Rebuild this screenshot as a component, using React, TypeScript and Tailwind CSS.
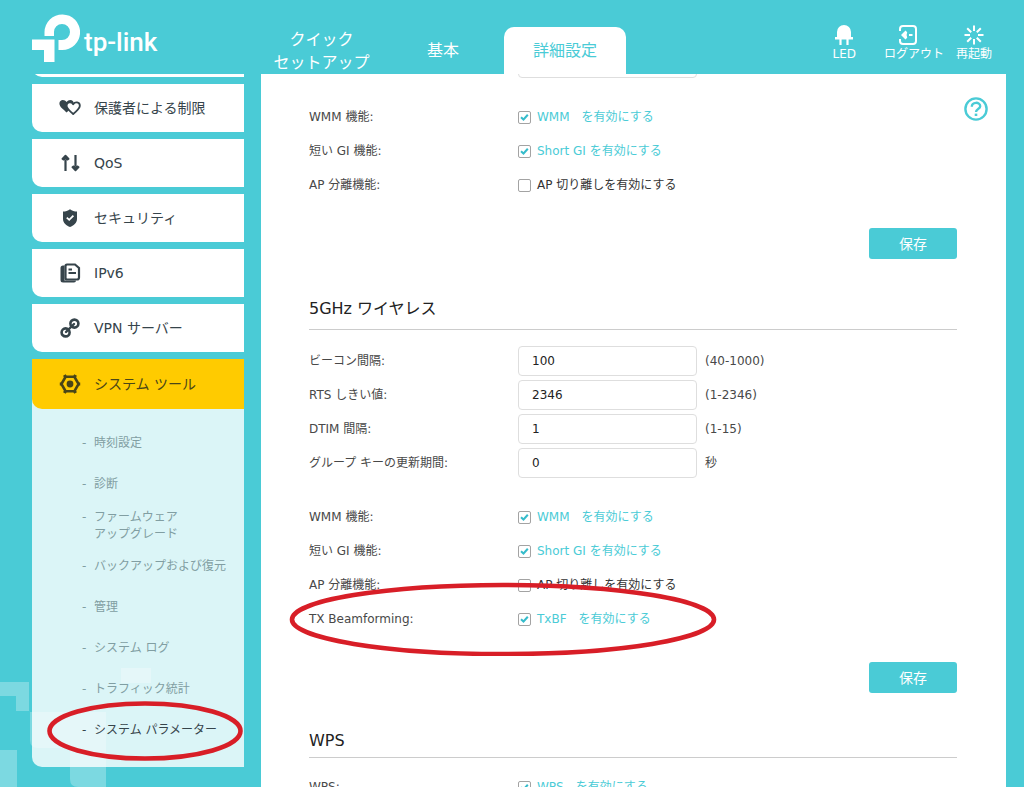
import React, { useId } from 'react';

type MenuIconName = 'heart' | 'qos' | 'shield' | 'doc' | 'link' | 'gear';

interface MenuEntry {
  label: string;
  icon: MenuIconName;
}

const MENU: MenuEntry[] = [
  { label: '保護者による制限', icon: 'heart' },
  { label: 'QoS', icon: 'qos' },
  { label: 'セキュリティ', icon: 'shield' },
  { label: 'IPv6', icon: 'doc' },
  { label: 'VPN サーバー', icon: 'link' },
];

const SUB_MENU: string[][] = [
  ['時刻設定'],
  ['診断'],
  ['ファームウェア', 'アップグレード'],
  ['バックアップおよび復元'],
  ['管理'],
  ['システム ログ'],
  ['トラフィック統計'],
];

const HEART = 'M0 3.4C-1.8 .4-7.2 .4-7.2 5C-7.2 8.6-2.8 11 0 14C2.8 11 7.2 8.6 7.2 5C7.2 .4 1.8 .4 0 3.4Z';

const MenuIcon: React.FC<{ name: MenuIconName }> = ({ name }) => (
  <svg viewBox="0 0 22 22" className="w-[22px] h-[22px] shrink-0 overflow-visible" fill="none" stroke="currentColor" strokeWidth={2} aria-hidden="true">
    {name === 'heart' && (
      <>
        <path d={HEART} transform="translate(7.6 1.6)" fill="currentColor" stroke="none" />
        <path d={HEART} transform="translate(14.2 4.2) scale(.92)" fill="#fff" strokeLinejoin="round" />
      </>
    )}
    {name === 'qos' && (
      <>
        <path d="M6.5 19V8M16.5 3v11" strokeWidth={2.2} />
        <path
          d="M6.5 3.6L9.6 6.8L8.6 7.6L6.5 6.6L4.4 7.6L3.4 6.8ZM16.5 18.4L13.4 15.2L14.4 14.4L16.5 15.4L18.6 14.4L19.6 15.2Z"
          fill="currentColor"
          strokeWidth={1.8}
          strokeLinejoin="round"
        />
      </>
    )}
    {name === 'shield' && (
      <>
        <path d="M11 2.2C13 3.6 15.5 4.4 18 4.6V12C18 16 14.5 18.6 11 20C7.5 18.6 4 16 4 12V4.6C6.5 4.4 9 3.6 11 2.2Z" fill="currentColor" stroke="none" />
        <path d="M7.8 10.6L10.2 12.8L14.4 8.6" stroke="#fff" strokeWidth={1.8} />
      </>
    )}
    {name === 'doc' && (
      <>
        <path d="M5.5 3.5H4Q1.5 3.5 1.5 6V18Q1.5 20.5 4 20.5H15Q17 20.5 17 18.5H5.5Z" fill="currentColor" stroke="none" />
        <path d="M8 2.5H16L20 6V15.500Q20 17.500 18 17.500H8Q6.500 17.500 6.500 16V4Q6.500 2.500 8 2.500Z" strokeWidth={2.2} />
        <path d="M9.5 7.500H13M9.500 11H17" strokeWidth={1.8} />
      </>
    )}
    {name === 'link' && (
      <>
        <circle cx="6.6" cy="15.4" r="4" strokeWidth={2.6} />
        <circle cx="15.4" cy="6.600" r="4" strokeWidth={2.6} />
        <path d="M7 15L15 7" strokeWidth={2.4} strokeLinecap="round" />
      </>
    )}
    {name === 'gear' && (
      <>
        <path d="M6.600 3.800H15.400L19.600 11L15.400 18.200H6.600L2.400 11Z" strokeWidth={2.6} />
        <circle cx="11" cy="11" r="3.4" fill="currentColor" stroke="none" />
        <path d="M5.4 2L7 5M16.6 2L15 5M5.4 20L7 17M16.6 20L15 17M.8 11H3.500M18.500 11H21.200" strokeWidth={3} />
      </>
    )}
  </svg>
);

const Header: React.FC = () => (
  <header className="flex h-[74px] shrink-0 items-end pl-8 pr-7 text-white">
    <a href="#home" className="flex h-full w-[229px] shrink-0 items-start gap-1 pt-3.5">
      <svg viewBox="32 14 48 48" className="h-12 w-12" fill="currentColor" aria-hidden="true">
        <path d="M44.5 36V32A17.8 17.8 0 1 1 62 50H58.5V40H62A8 8 0 1 0 54 32V36Z" />
        <path d="M32 39.5H54.5V62H44V50H32Z" />
      </svg>
      <span className="pt-2 font-[Roboto,sans-serif] text-[26px] leading-10 font-medium">tp-link</span>
    </a>
    <nav className="flex h-[47px] text-base leading-[23px]">
      <a href="#quick" className="flex w-[121px] items-center justify-center text-center">
        クイック
        <br />
        セットアップ
      </a>
      <a href="#basic" className="flex w-[122px] items-center justify-center">基本</a>
      <a href="#advanced" className="flex w-[122px] items-center justify-center rounded-t-[10px] bg-white text-[#4acbd6]">詳細設定</a>
    </nav>
    <div className="ml-auto flex h-full items-start gap-3 pt-6 pr-1 text-xs leading-4">
      <button type="button" className="mr-4 flex flex-col items-center">
        <svg viewBox="0 0 22 22" className="h-[22px] w-[22px]" fill="currentColor" aria-hidden="true">
          <path d="M4 13V8A7 7 0 0 1 18 8V13H20V15.400H15.600V21H13.400V15.400H8.600V21H6.400V15.400H2V13Z" />
        </svg>
        LED
      </button>
      <button type="button" className="flex flex-col items-center">
        <svg viewBox="0 0 32 22" className="h-[22px] w-8" fill="none" stroke="currentColor" strokeWidth={2} aria-hidden="true">
          <path d="M2 7V5Q2 2 5 2H15Q18 2 18 5V17Q18 20 15 20H5Q2 20 2 17V15" />
          <path d="M11 11H14.500" />
          <path d="M3 11L7.500 6.500L9.200 8.200L8.600 11L9.200 13.800L7.500 15.500Z" fill="currentColor" stroke="none" />
        </svg>
        ログアウト
      </button>
      <button type="button" className="flex flex-col items-center">
        <svg viewBox="0 0 22 22" className="h-[22px] w-[22px]" fill="none" stroke="currentColor" strokeWidth={2} aria-hidden="true">
          <path d="M11 1.500V7M11 15V20.500M1.500 11H7M15 11H20.500M4.200 4.200L8.200 8.200M13.800 13.800L17.800 17.800M17.800 4.200L13.800 8.200M8.200 13.800L4.200 17.800" />
        </svg>
        再起動
      </button>
    </div>
  </header>
);

const Sidebar: React.FC = () => (
  <aside className="w-[212px] shrink-0 overflow-hidden text-sm text-[#36444b]">
    <ul className="-mt-[45px] flex flex-col gap-[7px]">
      <li className="h-12 rounded-bl-[10px] bg-white" aria-hidden="true" />
      {MENU.map((item) => (
        <li key={item.label}>
          <a href={`#${item.icon}`} className="flex h-12 items-center gap-[13px] rounded-bl-[10px] bg-white pl-[27px]">
            <MenuIcon name={item.icon} />
            {item.label}
          </a>
        </li>
      ))}
      <li className="rounded-bl-[10px] bg-white/80">
        <a href="#tools" className="flex h-[50px] items-center gap-[13px] rounded-bl-[10px] bg-[#ffcb00] pl-[27px] text-[#4a4618]">
          <MenuIcon name="gear" />
          システム ツール
        </a>
        <ul className="pt-3.5 pb-4 text-xs leading-[17px] text-[#819ea2]">
          {SUB_MENU.map((lines) => (
            <li key={lines[0]} className="flex h-[41px] items-center pl-[50px]">
              <a href="#sub" className="flex">
                <span className="w-3">-</span>
                <span>
                  {lines.map((line) => (
                    <span key={line} className="block">{line}</span>
                  ))}
                </span>
              </a>
            </li>
          ))}
          <li className="relative flex h-[41px] items-center pl-[50px] text-[#36444b]">
            <a href="#params" aria-current="page" className="flex">
              <span className="w-3">-</span>
              <span>システム パラメーター</span>
            </a>
            <svg viewBox="0 0 198 62" className="pointer-events-none absolute -top-2.5 left-3.5 h-[62px] w-[198px]" fill="none" stroke="#d81e27" strokeWidth={4.600} aria-hidden="true">
              <ellipse cx="99" cy="31" rx="95.500" ry="27.500" />
            </svg>
          </li>
        </ul>
      </li>
    </ul>
  </aside>
);

const INPUT_CLASS = 'h-[30px] w-[179px] rounded border border-[#dedede] bg-white px-[13px] text-[#222]';

const FieldRow: React.FC<{ label: string; value: string; hint: string }> = ({ label, value, hint }) => {
  const id = useId();
  return (
    <div className="flex h-[34px] items-center">
      <label htmlFor={id} className="w-[209px]">{label}</label>
      <input id={id} type="text" defaultValue={value} className={INPUT_CLASS} />
      <span className="ml-2">{hint}</span>
    </div>
  );
};

interface CheckRowProps {
  label: string;
  text: string;
  checked?: boolean;
  children?: React.ReactNode;
}

const CheckRow: React.FC<CheckRowProps> = ({ label, text, checked = false, children }) => (
  <div className="relative flex h-[34px] items-center">
    <span className="w-[209px]">{label}</span>
    <label className="flex items-center gap-1.5 text-[#333] has-checked:text-[#4acbd6]">
      <span className="relative h-[13px] w-[13px]">
        <input
          type="checkbox"
          defaultChecked={checked}
          className="peer block h-[13px] w-[13px] appearance-none rounded-[2px] border border-[#a3a3a3] bg-white"
        />
        <svg viewBox="0 0 13 13" className="pointer-events-none absolute inset-0 hidden h-[13px] w-[13px] peer-checked:block" fill="none" stroke="#35bccb" strokeWidth={2} aria-hidden="true">
          <path d="M3 6.200L5.500 8.500L9.800 3.800" />
        </svg>
      </span>
      {text}
    </label>
    {children}
  </div>
);

const SaveRow: React.FC = () => (
  <div className="mt-[26px] flex justify-end">
    <button type="button" className="h-[31px] w-[88px] rounded-[3px] bg-[#4acbd6] text-sm text-white">保存</button>
  </div>
);

export default function App() {
  return (
    <div className="relative isolate flex h-screen flex-col overflow-hidden bg-[#4acbd6] font-['DejaVu_Sans','Noto_Sans_CJK_JP',sans-serif]" lang="ja">
      {/* pale blocks in the bottom left corner of the page */}
      <svg viewBox="0 0 160 120" className="absolute bottom-0 left-0 -z-10 h-[120px] w-40" fill="#fff" fillOpacity={0.28} aria-hidden="true">
        <path d="M0 15H29V44H16V29H0ZM0 83H17V120H0ZM121 1H151V16H121ZM30 45H106V120H78Q70 120 70 112V81H38Q30 81 30 73Z" />
      </svg>

      <Header />

      <div className="flex min-h-0 flex-1 gap-[17px] pr-[18px] pl-8">
        <Sidebar />

        <main className="relative min-w-0 flex-1 overflow-hidden bg-white pr-[49px] pl-12 text-xs text-[#484848]">
          <button type="button" aria-label="ヘルプ" className="absolute top-[23px] right-[18px] text-[#4acbd6]">
            <svg viewBox="0 0 24 24" className="h-6 w-6" fill="none" stroke="currentColor" aria-hidden="true">
              <circle cx="12" cy="12" r="10.600" strokeWidth={2.400} />
              <path d="M7.800 9.800C7.800 4.600 16.200 4.600 16.200 9.200C16.200 12 12 12 12 15" strokeWidth={2.400} />
              <path d="M12 16.600V19" strokeWidth={2.600} />
            </svg>
          </button>

          {/* last field of the section that is scrolled out of view */}
          <div className="-mt-7 flex h-[34px] items-center pl-[209px]">
            <input type="text" tabIndex={-1} aria-hidden="true" className={INPUT_CLASS} />
          </div>
          <div className="mt-5">
            <CheckRow label="WMM 機能:" text={'WMM\u3000を有効にする'} checked />
            <CheckRow label="短い GI 機能:" text="Short GI を有効にする" checked />
            <CheckRow label="AP 分離機能:" text="AP 切り離しを有効にする" />
          </div>
          <SaveRow />

          <h2 className="mt-[38px] border-b border-[#ccc] pb-2 text-base leading-6 text-[#222]">5GHz ワイヤレス</h2>
          <div className="mt-3.5">
            <FieldRow label="ビーコン間隔:" value="100" hint="(40-1000)" />
            <FieldRow label="RTS しきい値:" value="2346" hint="(1-2346)" />
            <FieldRow label="DTIM 間隔:" value="1" hint="(1-15)" />
            <FieldRow label="グループ キーの更新期間:" value="0" hint="秒" />
          </div>
          <div className="mt-5">
            <CheckRow label="WMM 機能:" text={'WMM\u3000を有効にする'} checked />
            <CheckRow label="短い GI 機能:" text="Short GI を有効にする" checked />
            <CheckRow label="AP 分離機能:" text="AP 切り離しを有効にする" />
            <CheckRow label="TX Beamforming:" text={'TxBF\u3000を有効にする'} checked>
              <svg viewBox="0 0 428 74" className="pointer-events-none absolute -top-5 -left-5 h-[74px] w-[428px]" fill="none" stroke="#d81e27" strokeWidth={4.600} aria-hidden="true">
                <ellipse cx="214" cy="37.500" rx="211" ry="34.500" />
              </svg>
            </CheckRow>
          </div>
          <SaveRow />

          <h2 className="mt-9 border-b border-[#ccc] pb-1 text-base leading-6 text-[#222]">WPS</h2>
          <div className="mt-3">
            <CheckRow label="WPS:" text={'WPS\u3000を有効にする'} checked />
          </div>
        </main>
      </div>
    </div>
  );
}
